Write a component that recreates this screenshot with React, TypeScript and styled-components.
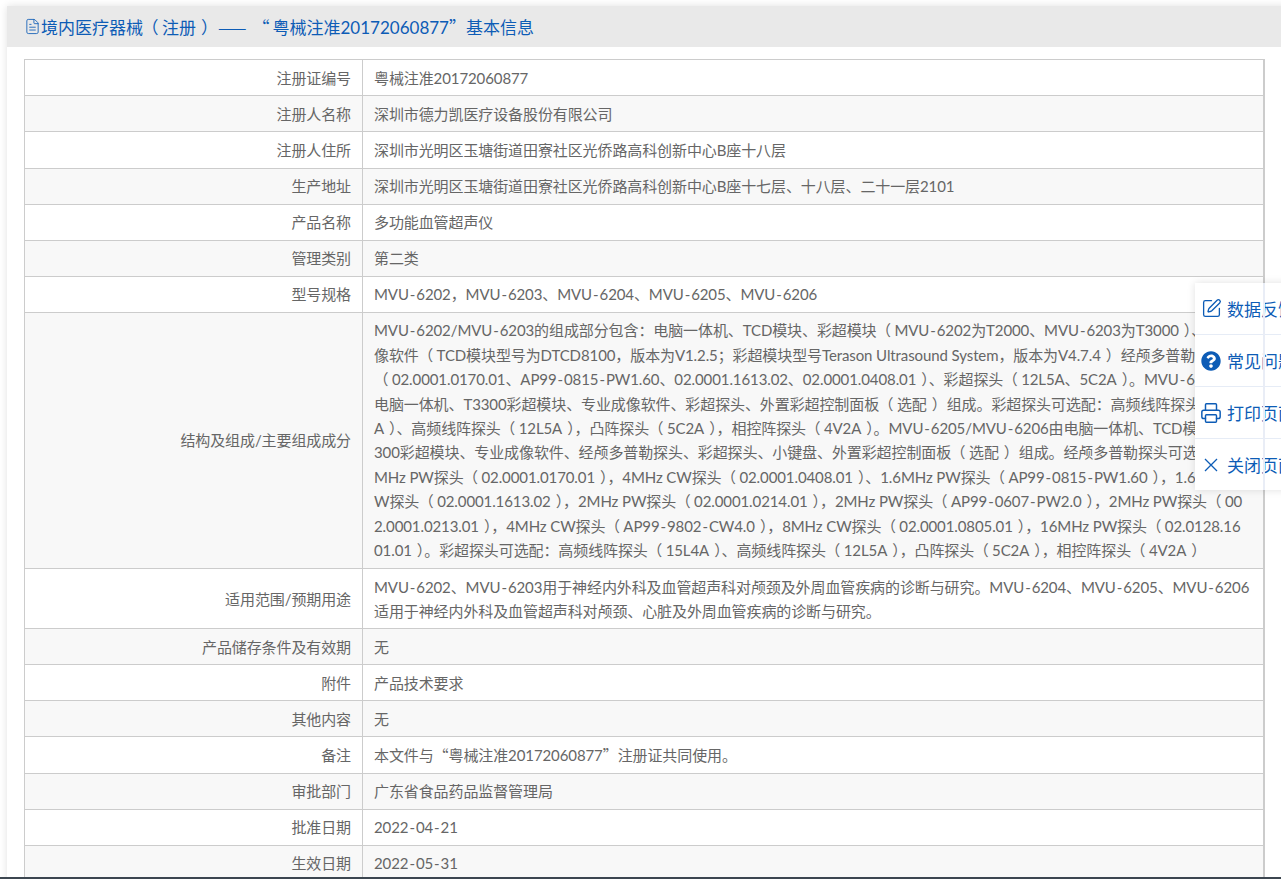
import React from "react";
import styled, { createGlobalStyle } from "styled-components";
import { FaQuestionCircle } from "react-icons/fa";
import { FileText, Printer, SquarePen } from "lucide-react";

const GlobalStyle = createGlobalStyle`
  html, body {
    margin: 0;
    height: 100%;
    overflow: hidden;
    background: #fff;
    font-family: Lato, "Noto Sans CJK SC", sans-serif;
    color: #666;
  }
`;

const Page = styled.div`
  position: relative;
  height: 879px;
  box-sizing: border-box;
  padding: 6px 0 0 7px;
  overflow: hidden;
  border-bottom: 2px solid #3c4650;
`;

const Card = styled.section`
  background: #fff;
  box-shadow: 0 0 8px rgba(0, 0, 0, 0.12);
  margin-right: -10px;
`;

const CardHeader = styled.header`
  display: flex;
  align-items: center;
  height: 41px;
  padding-left: 17px;
  background: #e9e9e9;
  color: #0d5cb6;
  font-size: 17px;
`;

const Title = styled.h1`
  margin: 0;
  font-size: inherit;
  font-weight: 400;
`;

// quotes and dashes take the full-width CJK glyphs, with a bit of extra room after some
const Punct = styled.span<{ $after?: number }>`
  font-family: "Noto Sans CJK SC", sans-serif;
  padding-right: ${({ $after }) => $after ?? 0}px;
`;

// the reference font centres its brackets in a wider box
const OpenParen = styled.span`
  font-feature-settings: "halt";
  padding: 0 3.5px 0 7px;
`;

const CloseParen = styled.span`
  padding-left: 5px;
`;

const Hyphen = styled.span`
  padding: 0 1px;
`;

const CardBody = styled.div`
  padding: 12.3px 0 0 17px;
`;

const Table = styled.table`
  width: 1241px;
  table-layout: fixed;
  border-collapse: collapse;
  font-size: 15px;
  letter-spacing: -0.1px;
  line-height: 24.1px;
  border-right: 2px solid #ccc;
`;

const Row = styled.tr`
  &:nth-child(even) {
    background: #f8f8f8;
  }
`;

const Label = styled.th`
  width: 338px;
  box-sizing: border-box;
  padding: 5.5px 11px 5.5px 10px;
  border: 1px solid #ccc;
  text-align: right;
  font-weight: 400;
`;

const Value = styled.td<{ $lineHeight?: number }>`
  padding: 5.5px 11px;
  border: 1px solid #ccc;
  line-height: ${({ $lineHeight }) => $lineHeight ?? 24.1}px;
`;

const Line = styled.div`
  white-space: nowrap;
`;

const SidePanel = styled.nav`
  position: absolute;
  top: 283px;
  left: 1195px;
  width: 130px;
  background: #fff;
  box-shadow: 0 0 8px rgba(0, 0, 0, 0.12);

  &::after {
    content: "";
    position: absolute;
    top: 0;
    bottom: 0;
    left: 68px;
    width: 2px;
    background: #e9edf6;
  }
`;

const SideItem = styled.a`
  display: flex;
  align-items: center;
  gap: 6px;
  height: 51px;
  padding-left: 6px;
  color: #0d5cb6;
  font-size: 17px;
  white-space: nowrap;
  border-bottom: 1px solid #e6ecf6;

  &:last-child {
    border-bottom: 0;
  }
`;

const IconBox = styled.span`
  flex: 0 0 20px;
  min-width: 0;
  display: flex;
  align-items: center;
  justify-content: center;

  svg {
    flex-shrink: 0;
  }
`;

const typeset = (text: string) =>
  text.split(/([（）-])/).map((part, index) => {
    if (part === "（") return <OpenParen key={index}>{part}</OpenParen>;
    if (part === "）") return <CloseParen key={index}>{part}</CloseParen>;
    if (part === "-") return <Hyphen key={index}>{part}</Hyphen>;
    return part;
  });

const rows: { label: string; lines: React.ReactNode[]; lineHeight?: number }[] = [
  { label: "注册证编号", lines: ["粤械注准20172060877"] },
  { label: "注册人名称", lines: ["深圳市德力凯医疗设备股份有限公司"] },
  { label: "注册人住所", lines: ["深圳市光明区玉塘街道田寮社区光侨路高科创新中心B座十八层"] },
  { label: "生产地址", lines: ["深圳市光明区玉塘街道田寮社区光侨路高科创新中心B座十七层、十八层、二十一层2101"] },
  { label: "产品名称", lines: ["多功能血管超声仪"] },
  { label: "管理类别", lines: ["第二类"] },
  { label: "型号规格", lines: ["MVU-6202，MVU-6203、MVU-6204、MVU-6205、MVU-6206"] },
  {
    label: "结构及组成/主要组成成分",
    lineHeight: 24.4,
    lines: [
      "MVU-6202/MVU-6203的组成部分包含：电脑一体机、TCD模块、彩超模块（MVU-6202为T2000、MVU-6203为T3000）、专业成",
      "像软件（TCD模块型号为DTCD8100，版本为V1.2.5；彩超模块型号Terason Ultrasound System，版本为V4.7.4）经颅多普勒探头",
      "（02.0001.0170.01、AP99-0815-PW1.60、02.0001.1613.02、02.0001.0408.01）、彩超探头（12L5A、5C2A）。MVU-6204由",
      "电脑一体机、T3300彩超模块、专业成像软件、彩超探头、外置彩超控制面板（选配）组成。彩超探头可选配：高频线阵探头（15L4",
      "A）、高频线阵探头（12L5A），凸阵探头（5C2A），相控阵探头（4V2A）。MVU-6205/MVU-6206由电脑一体机、TCD模块、T3",
      "300彩超模块、专业成像软件、经颅多普勒探头、彩超探头、小键盘、外置彩超控制面板（选配）组成。经颅多普勒探头可选配：1.6",
      "MHz PW探头（02.0001.0170.01），4MHz CW探头（02.0001.0408.01）、1.6MHz PW探头（AP99-0815-PW1.60），1.6MHz C",
      "W探头（02.0001.1613.02），2MHz PW探头（02.0001.0214.01），2MHz PW探头（AP99-0607-PW2.0），2MHz PW探头（00",
      "2.0001.0213.01），4MHz CW探头（AP99-9802-CW4.0），8MHz CW探头（02.0001.0805.01），16MHz PW探头（02.0128.16",
      "01.01）。彩超探头可选配：高频线阵探头（15L4A）、高频线阵探头（12L5A），凸阵探头（5C2A），相控阵探头（4V2A）",
    ],
  },
  {
    label: "适用范围/预期用途",
    lines: [
      "MVU-6202、MVU-6203用于神经内外科及血管超声科对颅颈及外周血管疾病的诊断与研究。MVU-6204、MVU-6205、MVU-6206",
      "适用于神经内外科及血管超声科对颅颈、心脏及外周血管疾病的诊断与研究。",
    ],
  },
  { label: "产品储存条件及有效期", lines: ["无"] },
  { label: "附件", lines: ["产品技术要求"] },
  { label: "其他内容", lines: ["无"] },
  {
    label: "备注",
    lines: [
      <>
        本文件与<Punct>“</Punct>粤械注准20172060877<Punct>”</Punct>注册证共同使用。
      </>,
    ],
  },
  { label: "审批部门", lines: ["广东省食品药品监督管理局"] },
  { label: "批准日期", lines: ["2022-04-21"] },
  { label: "生效日期", lines: ["2022-05-31"] },
];

export default function App() {
  return (
    <Page>
      <GlobalStyle />
      <Card>
        <CardHeader>
          <FileText size={17} strokeWidth={1.2} />
          <Title>
            境内医疗器械<OpenParen>（</OpenParen>注册<CloseParen>）</CloseParen>
            <Punct $after={6}>——</Punct>
            <Punct $after={3}>“</Punct>粤械注准20172060877<Punct>”</Punct>基本信息
          </Title>
        </CardHeader>
        <CardBody>
          <Table>
            <tbody>
              {rows.map(({ label, lines, lineHeight }) => (
                <Row key={label}>
                  <Label>{label}</Label>
                  <Value $lineHeight={lineHeight}>
                    {lines.map((line, index) => (
                      <Line key={index}>{typeof line === "string" ? typeset(line) : line}</Line>
                    ))}
                  </Value>
                </Row>
              ))}
            </tbody>
          </Table>
        </CardBody>
      </Card>
      <SidePanel>
        <SideItem>
          <IconBox>
            <SquarePen size={21} strokeWidth={1.5} />
          </IconBox>
          数据反馈
        </SideItem>
        <SideItem>
          <IconBox>
            <FaQuestionCircle size={20} />
          </IconBox>
          常见问题
        </SideItem>
        <SideItem>
          <IconBox>
            <Printer size={22} strokeWidth={1.6} />
          </IconBox>
          打印页面
        </SideItem>
        <SideItem>
          <IconBox>
            <svg width="16" height="16" viewBox="0 0 16 16" fill="none" stroke="currentColor" strokeWidth="1.3">
              <path d="M2 2 14 14M14 2 2 14" />
            </svg>
          </IconBox>
          关闭页面
        </SideItem>
      </SidePanel>
    </Page>
  );
}
